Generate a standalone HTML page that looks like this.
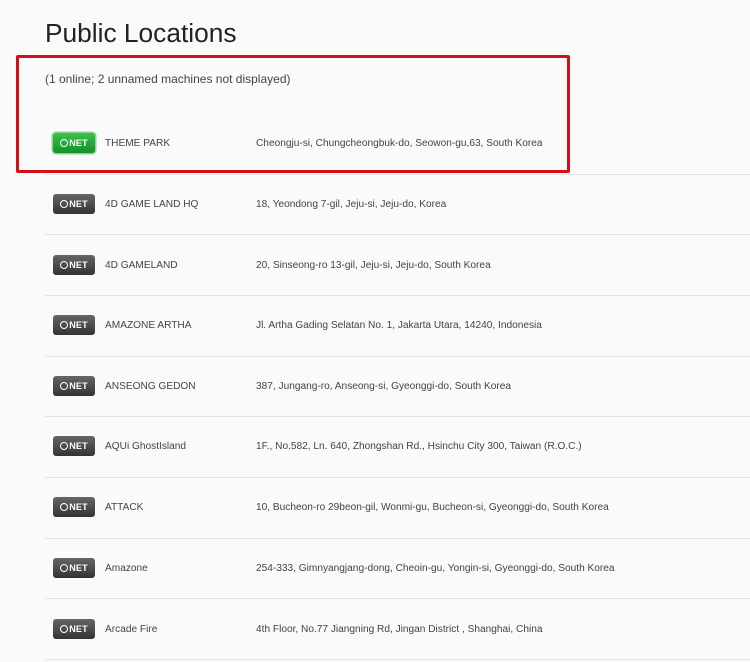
<!DOCTYPE html>
<html><head><style>
body{margin:0;width:750px;height:662px;background:#fafafa;font-family:"Liberation Sans",Arial,sans-serif;position:relative;overflow:hidden;color:#444}
h1{position:absolute;left:45px;top:18px;margin:0;font-weight:normal;font-size:26.3px;color:#222}
.sub{position:absolute;left:45px;top:72px;font-size:12px;color:#444}
.red{position:absolute;left:16px;top:55px;width:548px;height:112px;border:3px solid #d40f16;border-radius:2px}
.row{position:absolute;left:0;width:750px;height:20px;font-size:10.15px}
.badge{position:absolute;left:53px;top:0;width:42px;height:20px;border-radius:3px;background:linear-gradient(#666,#333);color:#fff;font-weight:bold;font-size:9px;line-height:20px;text-align:center;letter-spacing:0.2px}
.badge.g{background:linear-gradient(#3cc04a,#14902a);box-shadow:0 0 0 1.5px #8bd48f}
.badge i{display:inline-block;width:8px;height:8px;border:1.5px solid #fff;border-radius:50%;vertical-align:-1px;margin-right:1px;box-sizing:border-box}
.n{position:absolute;left:105px;top:5px}
.a{position:absolute;left:256px;top:5px}
.hr{position:absolute;left:45px;width:705px;height:1px;background:#e4e4e4}
</style></head><body>
<h1>Public Locations</h1>
<div class="sub">(1 online; 2 unnamed machines not displayed)</div>
<div class="red"></div>
<div class="row" style="top:133px"><div class="badge g"><i></i>NET</div><span class="n">THEME PARK</span><span class="a">Cheongju-si, Chungcheongbuk-do, Seowon-gu,63, South Korea</span></div>
<div class="hr" style="top:174px"></div>
<div class="row" style="top:194px"><div class="badge"><i></i>NET</div><span class="n">4D GAME LAND HQ</span><span class="a">18, Yeondong 7-gil, Jeju-si, Jeju-do, Korea</span></div>
<div class="hr" style="top:234px"></div>
<div class="row" style="top:255px"><div class="badge"><i></i>NET</div><span class="n">4D GAMELAND</span><span class="a">20, Sinseong-ro 13-gil, Jeju-si, Jeju-do, South Korea</span></div>
<div class="hr" style="top:295px"></div>
<div class="row" style="top:315px"><div class="badge"><i></i>NET</div><span class="n">AMAZONE ARTHA</span><span class="a">Jl. Artha Gading Selatan No. 1, Jakarta Utara, 14240, Indonesia</span></div>
<div class="hr" style="top:356px"></div>
<div class="row" style="top:376px"><div class="badge"><i></i>NET</div><span class="n">ANSEONG GEDON</span><span class="a">387, Jungang-ro, Anseong-si, Gyeonggi-do, South Korea</span></div>
<div class="hr" style="top:416px"></div>
<div class="row" style="top:436px"><div class="badge"><i></i>NET</div><span class="n">AQUi GhostIsland</span><span class="a">1F., No.582, Ln. 640, Zhongshan Rd., Hsinchu City 300, Taiwan (R.O.C.)</span></div>
<div class="hr" style="top:477px"></div>
<div class="row" style="top:497px"><div class="badge"><i></i>NET</div><span class="n">ATTACK</span><span class="a">10, Bucheon-ro 29beon-gil, Wonmi-gu, Bucheon-si, Gyeonggi-do, South Korea</span></div>
<div class="hr" style="top:538px"></div>
<div class="row" style="top:558px"><div class="badge"><i></i>NET</div><span class="n">Amazone</span><span class="a">254-333, Gimnyangjang-dong, Cheoin-gu, Yongin-si, Gyeonggi-do, South Korea</span></div>
<div class="hr" style="top:598px"></div>
<div class="row" style="top:619px"><div class="badge"><i></i>NET</div><span class="n">Arcade Fire</span><span class="a">4th Floor, No.77 Jiangning Rd, Jingan District , Shanghai, China</span></div>
<div class="hr" style="top:659px"></div>
</body></html>
